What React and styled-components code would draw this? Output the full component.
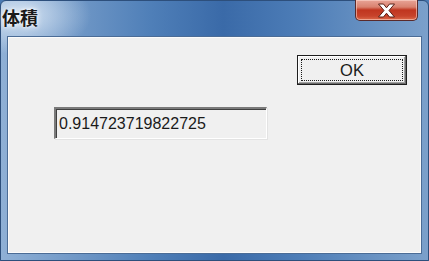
import React from "react";
import styled, { createGlobalStyle } from "styled-components";

const Global = createGlobalStyle`
  html, body { margin: 0; padding: 0; }
  body { width: 429px; height: 261px; overflow: hidden; background: #4a7ab3; }
  #root { width: 429px; height: 261px; }
`;

const Window = styled.div`
  width: 429px;
  height: 261px;
  box-sizing: border-box;
  display: flex;
  flex-direction: column;
  background:
    radial-gradient(ellipse 70px 40px at 20px 14px, rgba(225, 236, 248, 0.85), rgba(225, 236, 248, 0) 100%),
    linear-gradient(90deg, #8fb0d6 0%, #6f97c6 18%, #4f7fb8 35%, #3a6aa8 52%, #4d7db7 70%, #6a93c3 88%, #7ba0cb 100%);
  border: 1px solid #2d4f7c;
  border-radius: 6px 6px 0 0;
`;

const TitleBar = styled.div`
  height: 35px;
  flex: none;
  display: flex;
  align-items: flex-start;
  justify-content: space-between;
  padding-left: 1px;
`;

const Title = styled.div`
  font-family: "Noto Sans CJK JP", "Noto Sans CJK SC", sans-serif;
  font-size: 18px;
  font-weight: 600;
  line-height: 20px;
  margin-top: 6px;
  color: #1b1b1b;
  text-shadow: 0 0 6px rgba(255, 255, 255, 0.95), 0 0 3px rgba(255, 255, 255, 0.9);
`;

const CloseButton = styled.div`
  width: 63px;
  height: 21px;
  margin-top: -1px;
  margin-right: 10px;
  box-sizing: border-box;
  border: 1px solid #5a2a2a;
  border-top: none;
  border-radius: 0 0 5px 5px;
  background: linear-gradient(180deg, #e8a497 0%, #d9826f 35%, #c0351f 50%, #c7432b 80%, #dd6a4a 100%);
  box-shadow: inset 0 0 0 1px rgba(255, 220, 210, 0.55);
  display: flex;
  align-items: center;
  justify-content: center;
`;

const Client = styled.div`
  flex: 1;
  margin: 0 6px 6px 6px;
  background: #f0f0f0;
  border: 1px solid #4b6c96;
  box-shadow: inset 0 0 0 1px #fbfbfb;
  display: flex;
  flex-direction: column;
  padding: 18px 14px 0 46px;
`;

const ButtonRow = styled.div`
  display: flex;
  justify-content: flex-end;
`;

const OkButton = styled.button`
  width: 110px;
  height: 30px;
  box-sizing: border-box;
  background: #f0f0f0;
  border: 1px solid #1e1e1e;
  box-shadow: inset -1px -1px 0 #6b6b6b, inset 1px 1px 0 #ffffff, inset -2px -2px 0 #a0a0a0;
  padding: 3px;
  display: flex;
  cursor: default;
`;

const Focus = styled.span`
  flex: 1;
  border: 1px dotted #1a1a1a;
  display: flex;
  align-items: center;
  justify-content: center;
  padding-top: 1px;
  font-family: "Liberation Sans", Arial, sans-serif;
  font-size: 16.5px;
  color: #1a1a1a;
`;

const Field = styled.div`
  width: 213px;
  height: 32px;
  margin-top: 22px;
  box-sizing: border-box;
  background: #f0f0f0;
  border-top: 2px solid #7a7a7a;
  border-left: 2px solid #7a7a7a;
  border-right: 1px solid #ffffff;
  border-bottom: 1px solid #ffffff;
  box-shadow: inset 1px 1px 0 #404040, 1px 1px 0 #e3e3e3;
  display: flex;
  align-items: center;
  padding-left: 3px;
  font-family: "Liberation Sans", Arial, sans-serif;
  font-size: 16px;
  color: #1a1a1a;
`;

function CloseGlyph() {
  return (
    <svg width="19" height="15" viewBox="0 0 19 15">
      <path
        d="M1.5 1 L6.5 1 L9.5 4.8 L12.5 1 L17.5 1 L12 7.5 L17.5 14 L12.5 14 L9.5 10.2 L6.5 14 L1.5 14 L7 7.5 Z"
        fill="#ffffff"
        stroke="#5a1e14"
        strokeWidth="1"
        strokeLinejoin="round"
      />
    </svg>
  );
}

export default function App() {
  return (
    <>
      <Global />
      <Window>
        <TitleBar>
          <Title>体積</Title>
          <CloseButton>
            <CloseGlyph />
          </CloseButton>
        </TitleBar>
        <Client>
          <ButtonRow>
            <OkButton>
              <Focus>OK</Focus>
            </OkButton>
          </ButtonRow>
          <Field>0.914723719822725</Field>
        </Client>
      </Window>
    </>
  );
}
